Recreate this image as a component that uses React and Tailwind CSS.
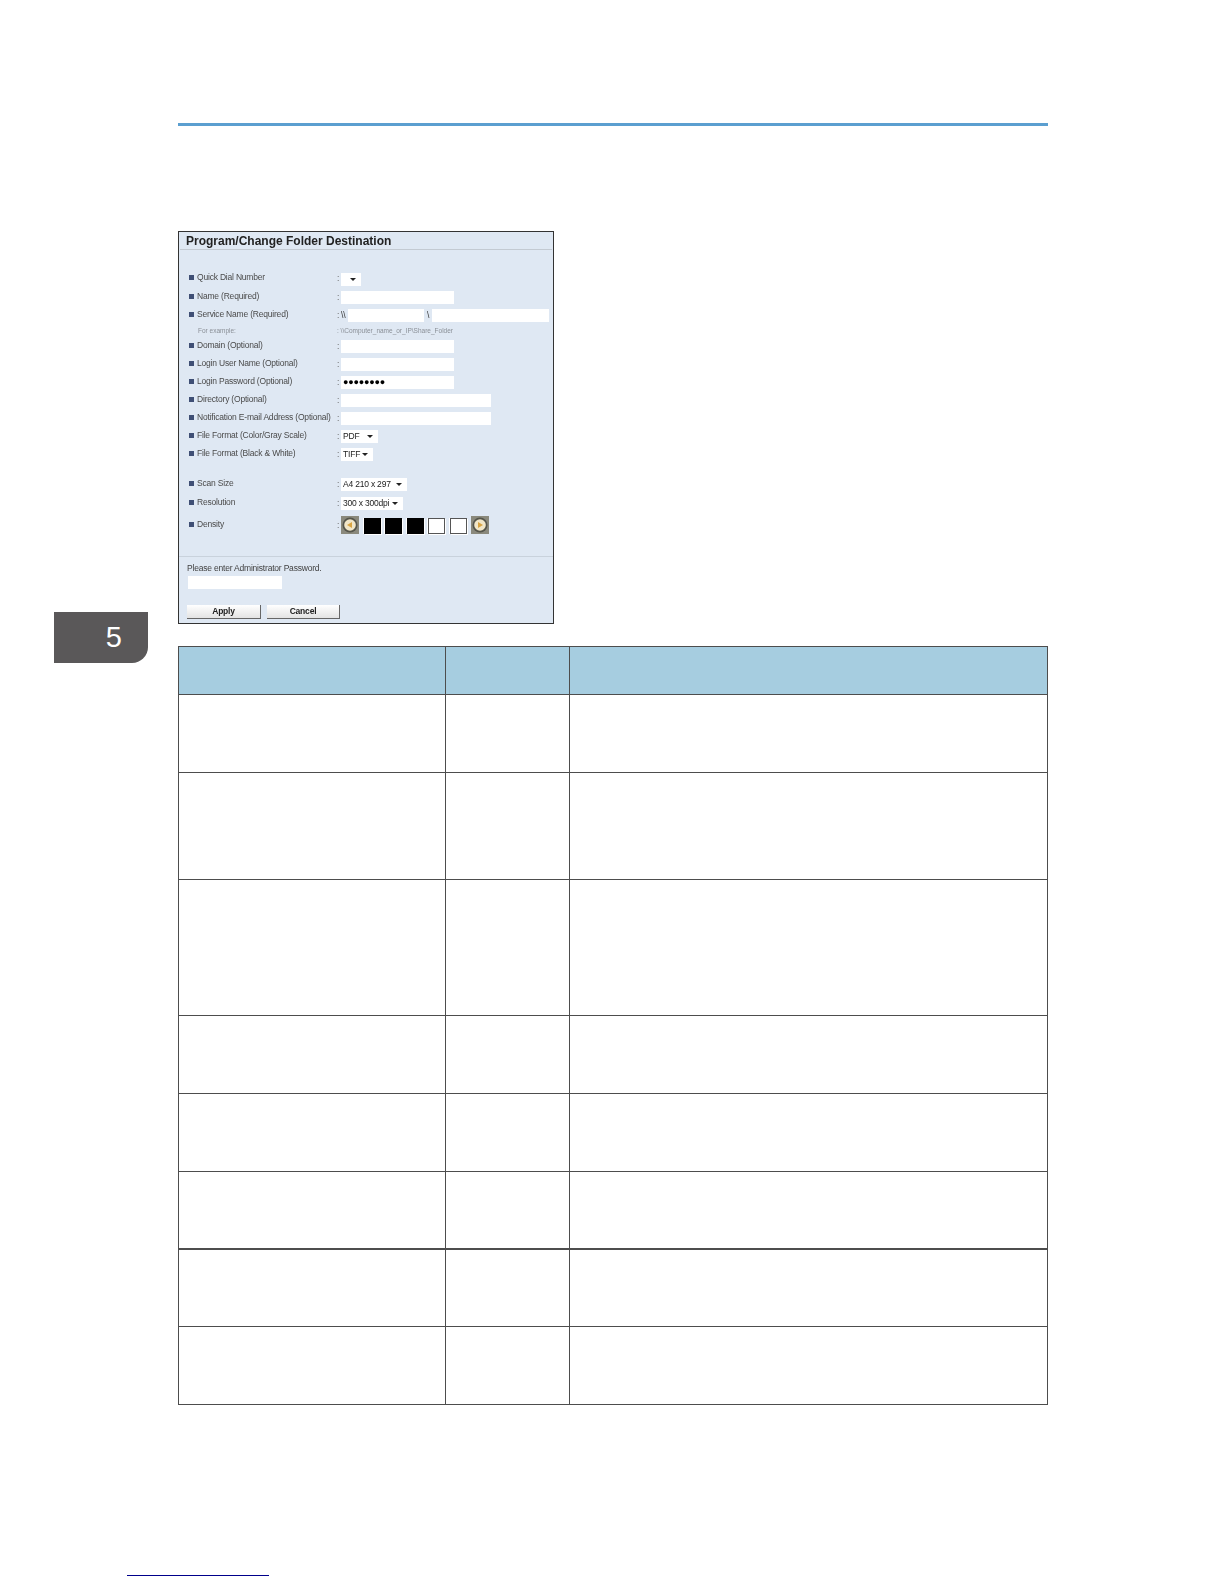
import React from "react";

const Field = ({ className = "" }) => <div className={`h-[13px] bg-white ${className}`} />;

const Select = ({ value, className = "" }) => (
  <div className={`h-[13px] bg-white flex items-center justify-between pl-[2px] pr-[5px] text-[#222] whitespace-nowrap ${className}`}>
    <span>{value}</span>
    <svg width="6" height="3" viewBox="0 0 6 3"><path d="M0 0h6L3 3z" fill="#222" /></svg>
  </div>
);

const Row = ({ label, height, children }) => (
  <div className={`flex items-center ${height}`}>
    <div className="w-[158px] pl-[10px] flex items-center gap-[3px] -translate-y-[1px] whitespace-nowrap">
      <span className="w-[5px] h-[5px] bg-[#3f4f75] shrink-0" />
      <span>{label}</span>
    </div>
    <span className="w-[4px] text-[#666]">:</span>
    {children}
  </div>
);

const Arrow = ({ flip }) => (
  <svg width="18" height="18" viewBox="0 0 18 18" className="shrink-0">
    <rect width="18" height="18" fill="#8a897c" />
    <circle cx="9" cy="9" r="7.5" fill="#55554b" />
    <circle cx="9" cy="9" r="5.8" fill="#f1e6c8" />
    <path d={flip ? "M7 6l5 3-5 3z" : "M11 6L6 9l5 3z"} fill="#d9a441" />
  </svg>
);

const Block = ({ on }) => (
  <div className={`w-[17px] h-[16px] shadow-[1px_1px_0_#fff,-1px_0_0_#fff] ${on ? "bg-black" : "bg-white border border-[#555]"}`} />
);

const rowHeights = [
  { head: true, h: "h-[48px]" },
  { h: "h-[78px]" },
  { h: "h-[107px]" },
  { h: "h-[136px]" },
  { h: "h-[78px]" },
  { h: "h-[78px]" },
  { h: "h-[77px]", thick: true },
  { h: "h-[78px]" },
  { h: "h-[78px]" },
];

const ScreenPanel = () => (
  <div className="w-[376px] h-[393px] mt-[105px] border border-[#333] bg-[#dfe8f3] flex flex-col text-[8.5px] tracking-[-0.2px] leading-none text-[#4a4a4a] blur-[0.35px] font-['Liberation_Sans',sans-serif]">
    <div className="h-[18px] mx-[1px] border-b border-[#c3cad2]">
      <h2 className="pl-[6px] pt-[2px] text-[12px] tracking-normal leading-[14px] font-bold text-[#222]">Program/Change Folder Destination</h2>
    </div>
    <div className="h-[19px]" />
    <Row label="Quick Dial Number" height="h-[19px]">
      <Select className="w-[20px] translate-y-[1px]" />
    </Row>
    <Row label="Name (Required)" height="h-[18px]">
      <Field className="w-[113px]" />
    </Row>
    <Row label="Service Name (Required)" height="h-[18px]">
      <span className="w-[7px] text-[#333]">\\</span>
      <Field className="w-[76px]" />
      <span className="w-[8px] pl-[3px] text-[#333]">\</span>
      <Field className="w-[117px]" />
    </Row>
    <div className="h-[14px] flex items-center text-[6.5px] tracking-normal text-[#8a8f96]">
      <span className="w-[158px] pl-[19px]">For example:</span>
      <span>: \\Computer_name_or_IP\Share_Folder</span>
    </div>
    <Row label="Domain (Optional)" height="h-[17px]">
      <Field className="w-[113px]" />
    </Row>
    <Row label="Login User Name (Optional)" height="h-[18px]">
      <Field className="w-[113px]" />
    </Row>
    <Row label="Login Password (Optional)" height="h-[18px]">
      <div className="w-[113px] h-[13px] bg-white pl-[2px] flex items-center text-[9px] tracking-[-0.2px] text-black">●●●●●●●●</div>
    </Row>
    <Row label="Directory (Optional)" height="h-[18px]">
      <Field className="w-[150px]" />
    </Row>
    <Row label="Notification E-mail Address (Optional)" height="h-[18px]">
      <Field className="w-[150px]" />
    </Row>
    <Row label="File Format (Color/Gray Scale)" height="h-[18px]">
      <Select value="PDF" className="w-[37px]" />
    </Row>
    <Row label="File Format (Black & White)" height="h-[18px]">
      <Select value="TIFF" className="w-[32px]" />
    </Row>
    <div className="h-[12px]" />
    <Row label="Scan Size" height="h-[18px]">
      <Select value="A4 210 x 297" className="w-[66px]" />
    </Row>
    <Row label="Resolution" height="h-[20px]">
      <Select value="300 x 300dpi" className="w-[62px]" />
    </Row>
    <Row label="Density" height="h-[24px]">
      <div className="flex items-end gap-[4.5px]">
        <Arrow />
        <Block on />
        <Block on />
        <Block on />
        <Block />
        <Block />
        <Arrow flip />
      </div>
    </Row>
    <div className="h-[20px] border-b border-[#c9d2dc]" />
    <div className="pl-[8px] pt-[7px] h-[18px] text-[#3f3f3f]">Please enter Administrator Password.</div>
    <Field className="w-[94px] ml-[9px] mt-[1px]" />
    <div className="flex gap-[6px] pl-[8px] mt-[16px] text-[#222] font-bold">
      <button className="w-[74px] h-[14px] bg-gradient-to-b from-white to-[#e3e3e3] border-b border-r border-[#666]">Apply</button>
      <button className="w-[73px] h-[14px] bg-gradient-to-b from-white to-[#e3e3e3] border-b border-r border-[#666]">Cancel</button>
    </div>
  </div>
);

const InfoTable = () => (
  <table className="mt-[22px] w-[869px] table-fixed border-collapse">
    <colgroup>
      <col className="w-[267px]" />
      <col className="w-[124px]" />
      <col className="w-[478px]" />
    </colgroup>
    <tbody>
      {rowHeights.map((row, i) => (
        <tr key={i} className={`${row.h} ${row.head ? "bg-[#a6cde0]" : ""}`}>
          {[0, 1, 2].map((c) => (
            <td key={c} className={`p-0 border-x border-t border-[#4d4d4d] ${row.thick ? "border-b-2" : "border-b"}`} />
          ))}
        </tr>
      ))}
    </tbody>
  </table>
);

export default function App() {
  return (
    <div className="w-[1224px] h-[1584px] bg-white overflow-hidden">
      <div className="flex h-[1575px]">
        <div className="w-[178px] pt-[612px] pl-[54px]">
          <div className="w-[94px] h-[51px] bg-[#5a5859] rounded-br-[16px] flex items-center justify-end pr-[26px] text-white text-[29px] font-['Liberation_Sans',sans-serif]">
            5
          </div>
        </div>
        <div className="flex flex-col pt-[123px]">
          <div className="w-[870px] h-[3px] bg-[#5b9fd0]" />
          <ScreenPanel />
          <InfoTable />
        </div>
      </div>
      <div className="ml-[127px] w-[142px] h-px bg-[#00008b]" />
    </div>
  );
}
